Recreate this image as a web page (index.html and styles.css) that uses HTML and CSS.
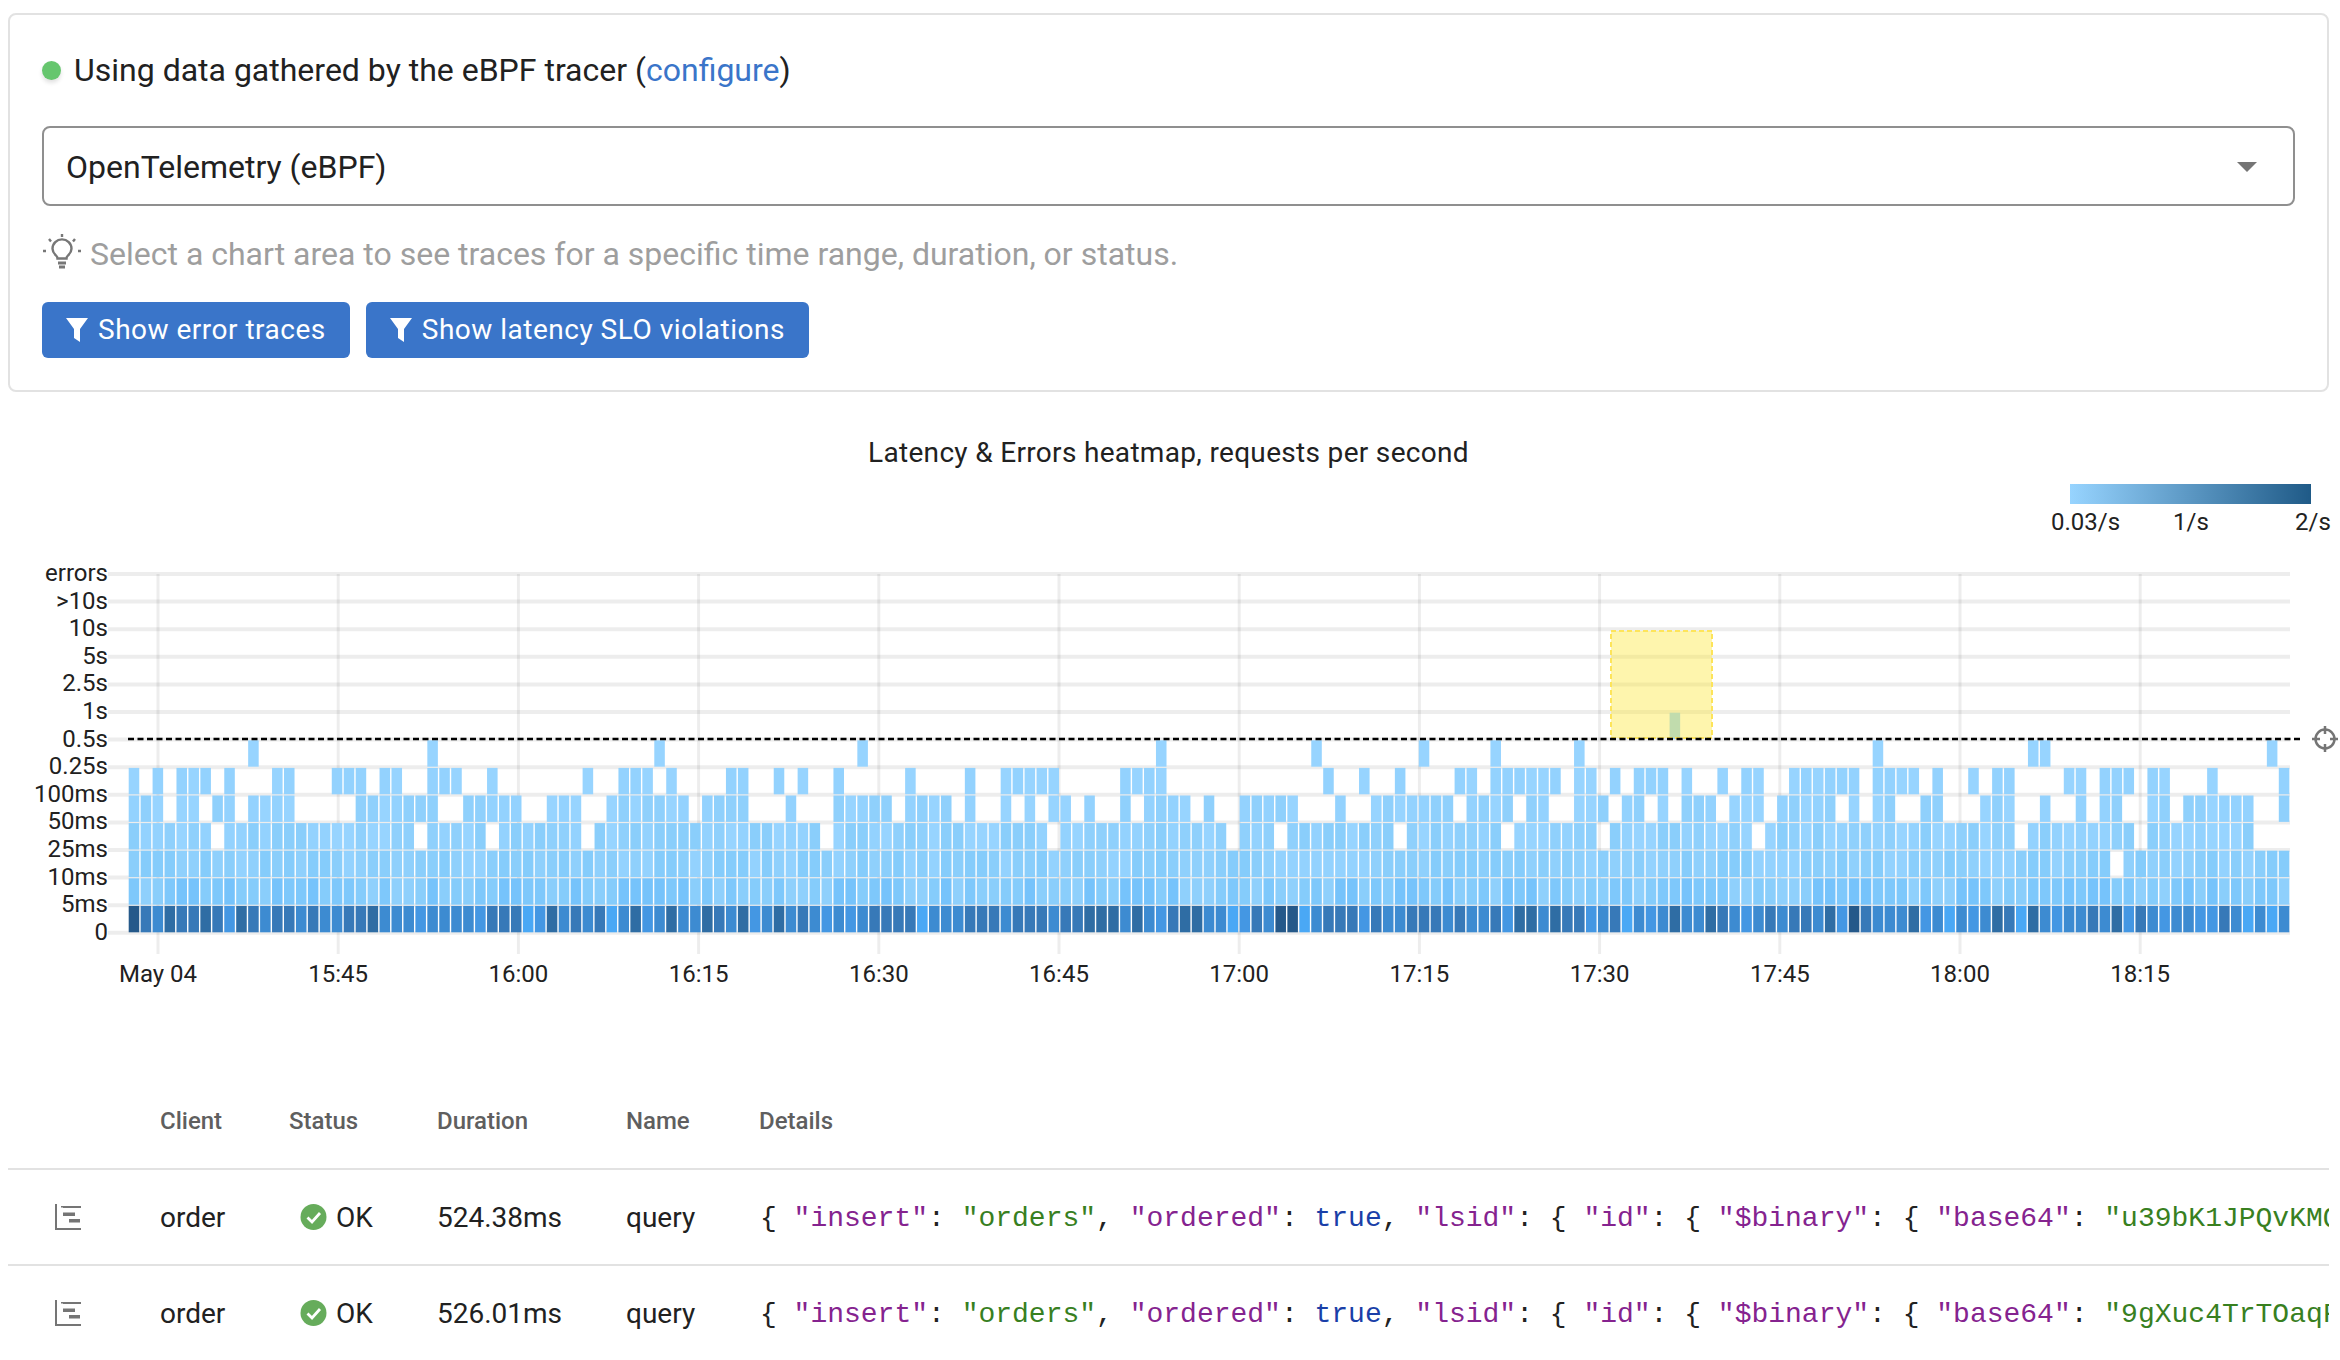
FILE: index.html
```html
<!DOCTYPE html>
<html>

<head>
    <meta charset="UTF-8">
    <title>Tracing</title>
    <link rel="stylesheet" href="styles.css">
</head>

<body>
    <div class="card">
        <div class="status-line">
            <span class="dot"></span>
            <span>Using data gathered by the eBPF tracer (<a class="link" href="#">configure</a>)</span>
        </div>
        <div class="select">
            <span>OpenTelemetry (eBPF)</span>
            <span class="caret"></span>
        </div>
        <div class="hint">
            <svg class="hint-icon" viewBox="0 0 38 38" fill="none" stroke="#777" stroke-width="2.4">
                <path d="M13 24c-2-2-3.500-4-3.500-7a9.500 9.500 0 0 1 19 0c0 3-1.500 5-3.500 7-1 1-1.500 2-1.500 3h-9c0-1-.5-2-1.500-3z" transform="translate(0 -2) scale(1 .98)" />
                <path d="M15 29h8M16 33h6" stroke-width="3" />
                <path d="M19 0v3M6 5l2 2.500M32 5l-2 2.500M0 17h3M35 17h3" />
            </svg>
            <span>Select a chart area to see traces for a specific time range, duration, or status.</span>
        </div>
        <div class="actions">
            <button class="btn">
                <svg class="funnel" viewBox="0 0 22 24"><path d="M0 0h22l-8 11v13l-6-4v-9z" /></svg>
                Show error traces
            </button>
            <button class="btn">
                <svg class="funnel" viewBox="0 0 22 24"><path d="M0 0h22l-8 11v13l-6-4v-9z" /></svg>
                Show latency SLO violations
            </button>
        </div>
    </div>

    <div class="chart-title">Latency &amp; Errors heatmap, requests per second</div>
    <div class="legend">
        <div class="legend-bar"></div>
        <div class="legend-labels">
            <span>0.03/s</span>
            <span>1/s</span>
            <span>2/s</span>
        </div>
    </div>
    <svg id="heatmap" class="heatmap" width="2340" height="440" viewBox="0 560 2340 440"></svg>

    <div class="traces">
        <div class="trace-row trace-head">
            <span></span>
            <span>Client</span>
            <span>Status</span>
            <span>Duration</span>
            <span>Name</span>
            <span>Details</span>
        </div>
        <div class="trace-row">
            <svg class="trace-icon" viewBox="0 0 26 26">
                <path d="M0 0h2v24h24v2H0zM6 2h20v2H8v-.5H6zM8 8.500h12v3.500H8zM14 15h11v3.500H14z" fill="#757575" />
            </svg>
            <span>order</span>
            <span class="status">
                <svg class="ok-icon" viewBox="0 0 26 26"><circle cx="13" cy="13" r="13" fill="#66ac5b" /><path d="M7 13.500l4.500 4.500 8-9" fill="none" stroke="#fff" stroke-width="2.800" /></svg>
                OK
            </span>
            <span>524.38ms</span>
            <span>query</span>
            <code class="details">{ <i class="k">"insert"</i>: <i class="s">"orders"</i>, <i class="k">"ordered"</i>: <i class="b">true</i>, <i class="k">"lsid"</i>: { <i class="k">"id"</i>: { <i class="k">"$binary"</i>: { <i class="k">"base64"</i>: <i class="s">"u39bK1JPQvKMQ7xGdW1A=="</i></code>
        </div>
        <div class="trace-row">
            <svg class="trace-icon" viewBox="0 0 26 26">
                <path d="M0 0h2v24h24v2H0zM6 2h20v2H8v-.5H6zM8 8.500h12v3.500H8zM14 15h11v3.500H14z" fill="#757575" />
            </svg>
            <span>order</span>
            <span class="status">
                <svg class="ok-icon" viewBox="0 0 26 26"><circle cx="13" cy="13" r="13" fill="#66ac5b" /><path d="M7 13.500l4.500 4.500 8-9" fill="none" stroke="#fff" stroke-width="2.800" /></svg>
                OK
            </span>
            <span>526.01ms</span>
            <span>query</span>
            <code class="details">{ <i class="k">"insert"</i>: <i class="s">"orders"</i>, <i class="k">"ordered"</i>: <i class="b">true</i>, <i class="k">"lsid"</i>: { <i class="k">"id"</i>: { <i class="k">"$binary"</i>: { <i class="k">"base64"</i>: <i class="s">"9gXuc4TrTOaqFm2PzL8Q=="</i></code>
        </div>
    </div>

    <script src="chart.js"></script>
</body>

</html>
```

FILE: styles.css
```css
* {
    box-sizing: border-box;
}

body {
    margin: 0;
    background: #fff;
    color: #212121;
    font-family: Roboto, sans-serif;
    font-size: 32px;
    overflow: hidden;
}

.card {
    margin: 13px 11px 0 8px;
    padding: 32px 32px 31px;
    border: 2px solid #e2e2e2;
    border-radius: 8px;
    height: 379px;
}

.status-line {
    display: flex;
    align-items: center;
    gap: 13px;
    height: 46px;
    margin-bottom: 33px;
}

.dot {
    width: 19px;
    height: 19px;
    border-radius: 50%;
    background: #66c66e;
    box-shadow: 0 3px 4px rgba(0, 0, 0, 0.12);
}

.link {
    color: #3a75c9;
    text-decoration: none;
}

.select {
    display: flex;
    align-items: center;
    justify-content: space-between;
    height: 80px;
    padding: 2px 36px 0 22px;
    border: 2px solid #8f8f8f;
    border-radius: 8px;
}

.caret {
    width: 0;
    height: 0;
    border-left: 10px solid transparent;
    border-right: 10px solid transparent;
    border-top: 10px solid #757575;
}

.hint {
    display: flex;
    align-items: center;
    gap: 9px;
    height: 44px;
    margin-top: 26px;
    color: #9e9e9e;
}

.hint-icon {
    width: 38px;
    height: 38px;
    margin: -2px 0 0 1px;
}

.actions {
    display: flex;
    gap: 16px;
    margin-top: 26px;
}

.btn {
    display: flex;
    align-items: center;
    gap: 10px;
    height: 56px;
    padding: 0 24px 1px;
    border: none;
    border-radius: 6px;
    background: #3a75c9;
    color: #fff;
    font-family: Roboto, sans-serif;
    font-size: 28px;
    letter-spacing: 0.5px;
}

.funnel {
    width: 22px;
    height: 24px;
    fill: #fff;
}

.chart-title {
    margin-top: 41px;
    height: 40px;
    line-height: 40px;
    text-align: center;
    font-size: 28px;
    letter-spacing: 0.32px;
    padding-right: 3px;
}

.legend {
    margin: 11px 0 0 2051px;
    height: 76px;
}

.legend-bar {
    width: 241px;
    height: 20px;
    margin-left: 19px;
    background: linear-gradient(to right, #97d4ff, #1f5a87);
}

.legend-labels {
    display: grid;
    grid-template-columns: 122px 122px auto;
    margin-top: 2px;
    font-size: 24px;
    line-height: 32px;
    color: #222;
}

.heatmap {
    display: block;
}

.axis-label {
    font-family: Roboto, sans-serif;
    font-size: 24px;
    fill: #212121;
}

.traces {
    margin: 73px 11px 0 8px;
    font-size: 28px;
}

.trace-row {
    display: grid;
    grid-template-columns: 152px 129px 148px 189px 133px 1fr;
    align-items: center;
    height: 96px;
    border-bottom: 2px solid #e2e2e2;
    overflow: hidden;
    white-space: nowrap;
}

.trace-head {
    height: 97px;
    font-size: 24px;
    font-weight: 500;
    color: #5f5f5f;
}

.trace-icon {
    width: 26px;
    height: 26px;
    margin-left: 47px;
}

.status {
    display: flex;
    align-items: center;
    gap: 9px;
    padding-left: 11px;
}

.ok-icon {
    width: 27px;
    height: 26px;
}

.details {
    padding: 2px 0 0 1px;
    font-family: "Liberation Mono", monospace;
    font-size: 28px;
    color: #222;
    overflow: hidden;
}

.details i {
    font-style: normal;
}

.k {
    color: #85238f;
}

.s {
    color: #38801f;
}

.b {
    color: #1a3fa8;
}
```

FILE: chart.js
```js
// Heatmap is drawn in page coordinates (see viewBox on the svg)
const svg = document.getElementById('heatmap');
const NS = 'http://www.w3.org/2000/svg';

const COLS = 181;
const CELL_W = 11.945;
const ROW_H = 27.6;
const LEFT = 128;
const RIGHT = 2290;
const TOP = 574;

const yLabels = ['errors', '>10s', '10s', '5s', '2.5s', '1s', '0.5s', '0.25s', '100ms', '50ms', '25ms', '10ms', '5ms', '0'];
const xLabels = ['May 04', '15:45', '16:00', '16:15', '16:30', '16:45', '17:00', '17:15', '17:30', '17:45', '18:00', '18:15'];

// column indexes read off the chart, row by row (bottom rows are nearly full)
const rowA = [10, 25, 44, 61, 86, 99, 108, 114, 121, 146, 159, 160, 179];
const rowB = [0, 2, 4, 5, 6, 8, 12, 13, 17, 18, 19, 21, 22, 25, 26, 27, 30, 38, 41, 42, 43, 45, 50, 51, 54, 56, 59, 65, 70, 73, 74, 75, 76, 77, 83, 84, 85, 86, 100, 103, 106, 111, 112, 114, 115, 116, 117, 118, 119, 121, 122, 124, 126, 127, 128, 130, 133, 135, 136, 139, 140, 141, 142, 143, 144, 146, 147, 148, 149, 151, 154, 156, 157, 162, 163, 165, 166, 167, 169, 170, 174, 180];
const rowC = [0, 1, 2, 4, 5, 7, 8, 10, 11, 12, 13, 19, 20, 21, 22, 23, 24, 25, 28, 29, 30, 31, 32, 35, 36, 37, 40, 41, 42, 43, 44, 45, 46, 48, 49, 50, 51, 55, 59, 60, 61, 62, 63, 65, 66, 67, 68, 70, 73, 75, 77, 78, 80, 83, 85, 86, 87, 88, 90, 93, 94, 95, 96, 97, 101, 104, 105, 106, 107, 108, 109, 110, 112, 113, 114, 115, 117, 118, 121, 122, 123, 125, 126, 128, 130, 131, 132, 134, 135, 136, 138, 139, 140, 141, 142, 144, 146, 147, 150, 151, 155, 156, 157, 160, 163, 165, 166, 169, 170, 172, 173, 174, 175, 176, 177, 180];
const holesD = [7, 24, 30, 38, 58, 77, 92, 96, 106, 115, 123, 136, 158, 168, 178, 179, 180];
const holesE = [166];

// per-column shade of the 0-5ms row, 0 is darkest
const bottomShades = [
    0, 2, 3, 1, 2, 2, 1, 2, 4, 1, 2, 3, 2, 2, 3, 2, 3, 3, 2, 2, 1, 3, 3, 3, 4, 3, 3, 3, 3, 4, 2, 2, 2,
    5, 4, 1, 3, 2, 3, 2, 5, 3, 1, 4, 3, 1, 3, 3, 1, 2, 3, 1, 4, 3, 1, 3, 2, 3,
    4, 3, 4, 3, 2, 2, 2, 2, 5, 3, 3, 3, 2, 2, 2, 3, 2, 2, 2, 3, 2, 2, 1, 1, 1,
    3, 1, 3, 4, 2, 1, 1, 3, 3, 5, 4, 2, 3, 0, 0, 5, 3, 2, 2, 2, 4, 2, 3, 3, 2,
    2, 2, 3, 2, 3, 3, 2, 4, 1, 1, 3, 1, 2, 2, 4, 3, 2, 5, 3, 4, 3, 1, 3, 3, 1,
    2, 3, 4, 3, 2, 3, 2, 2, 3, 1, 4, 0, 2, 3, 3, 3, 1, 4, 3, 5, 3, 4, 3, 1, 2,
    5, 1, 3, 4, 3, 3, 2, 3, 1, 4, 2, 3, 4, 3, 3, 4, 4, 2, 3, 5, 3, 5, 3
];
const darkBlues = ['#25598a', '#2f6da4', '#3779b8', '#3d8bd1', '#4497e3', '#4aa8f5'];
const lightBlues = ['#97d4ff', '#93d2fe', '#8fd0fc', '#8acefb', '#85ccfb', '#7ec8fb', '#76c3fb'];

function el(name, attrs, text) {
    const node = document.createElementNS(NS, name);
    for (const key in attrs) node.setAttribute(key, attrs[key]);
    if (text) node.textContent = text;
    svg.appendChild(node);
    return node;
}

// repeatable noise so light cells differ a bit from each other
function noise(col, row) {
    const v = Math.sin(col * 12.9898 + row * 78.233) * 43758.5453;
    return v - Math.floor(v);
}

function lightShade(col, row, min, spread) {
    return lightBlues[min + Math.floor(noise(col, row) * spread)];
}

function cell(col, row, fill) {
    el('rect', {
        x: LEFT + col * CELL_W + 0.7,
        y: TOP + row * ROW_H + 0.7,
        width: CELL_W - 1.4,
        height: ROW_H - 1.2,
        fill: fill
    });
}

// grid
yLabels.forEach((label, i) => {
    const y = TOP + i * ROW_H;
    el('line', { x1: 108, x2: RIGHT, y1: y, y2: y, stroke: '#000', 'stroke-opacity': 0.07, 'stroke-width': 4 });
    el('text', { x: 108, y: y + 7, 'text-anchor': 'end', class: 'axis-label' }, label);
});
xLabels.forEach((label, i) => {
    const x = 158 + i * 180.2;
    el('line', { x1: x, x2: x, y1: TOP, y2: 954, stroke: '#000', 'stroke-opacity': 0.07, 'stroke-width': 3 });
    el('text', { x: x, y: 982, 'text-anchor': 'middle', class: 'axis-label' }, label);
});

// cells, rows 6..12 from the top of the grid
cell(129, 5, '#97d4ff');
rowA.forEach(c => cell(c, 6, '#97d4ff'));
rowB.forEach(c => cell(c, 7, lightShade(c, 7, 0, 2)));
rowC.forEach(c => cell(c, 8, lightShade(c, 8, 0, 3)));
for (let c = 0; c < COLS; c++) {
    if (!holesD.includes(c)) cell(c, 9, lightShade(c, 9, 0, 4));
    if (!holesE.includes(c)) cell(c, 10, lightShade(c, 10, 1, 4));
    cell(c, 11, lightShade(c, 11, 2, 5));
    cell(c, 12, darkBlues[bottomShades[c]]);
}

// selected region
el('rect', {
    x: 1611, y: 631, width: 101, height: 107,
    fill: 'rgba(252, 230, 60, 0.42)',
    stroke: '#fde45a', 'stroke-width': 2, 'stroke-dasharray': '5 3'
});

// latency SLO line with its handle
el('line', { x1: 128, x2: 2303, y1: 739, y2: 739, stroke: '#000', 'stroke-width': 2.4, 'stroke-dasharray': '6 3.500' });
el('circle', { cx: 2325, cy: 739, r: 9.5, fill: 'none', stroke: '#757575', 'stroke-width': 2.5 });
el('path', { d: 'M2325 726v8M2325 744v8M2312 739h8M2330 739h8', stroke: '#757575', 'stroke-width': 2.5 });
```
